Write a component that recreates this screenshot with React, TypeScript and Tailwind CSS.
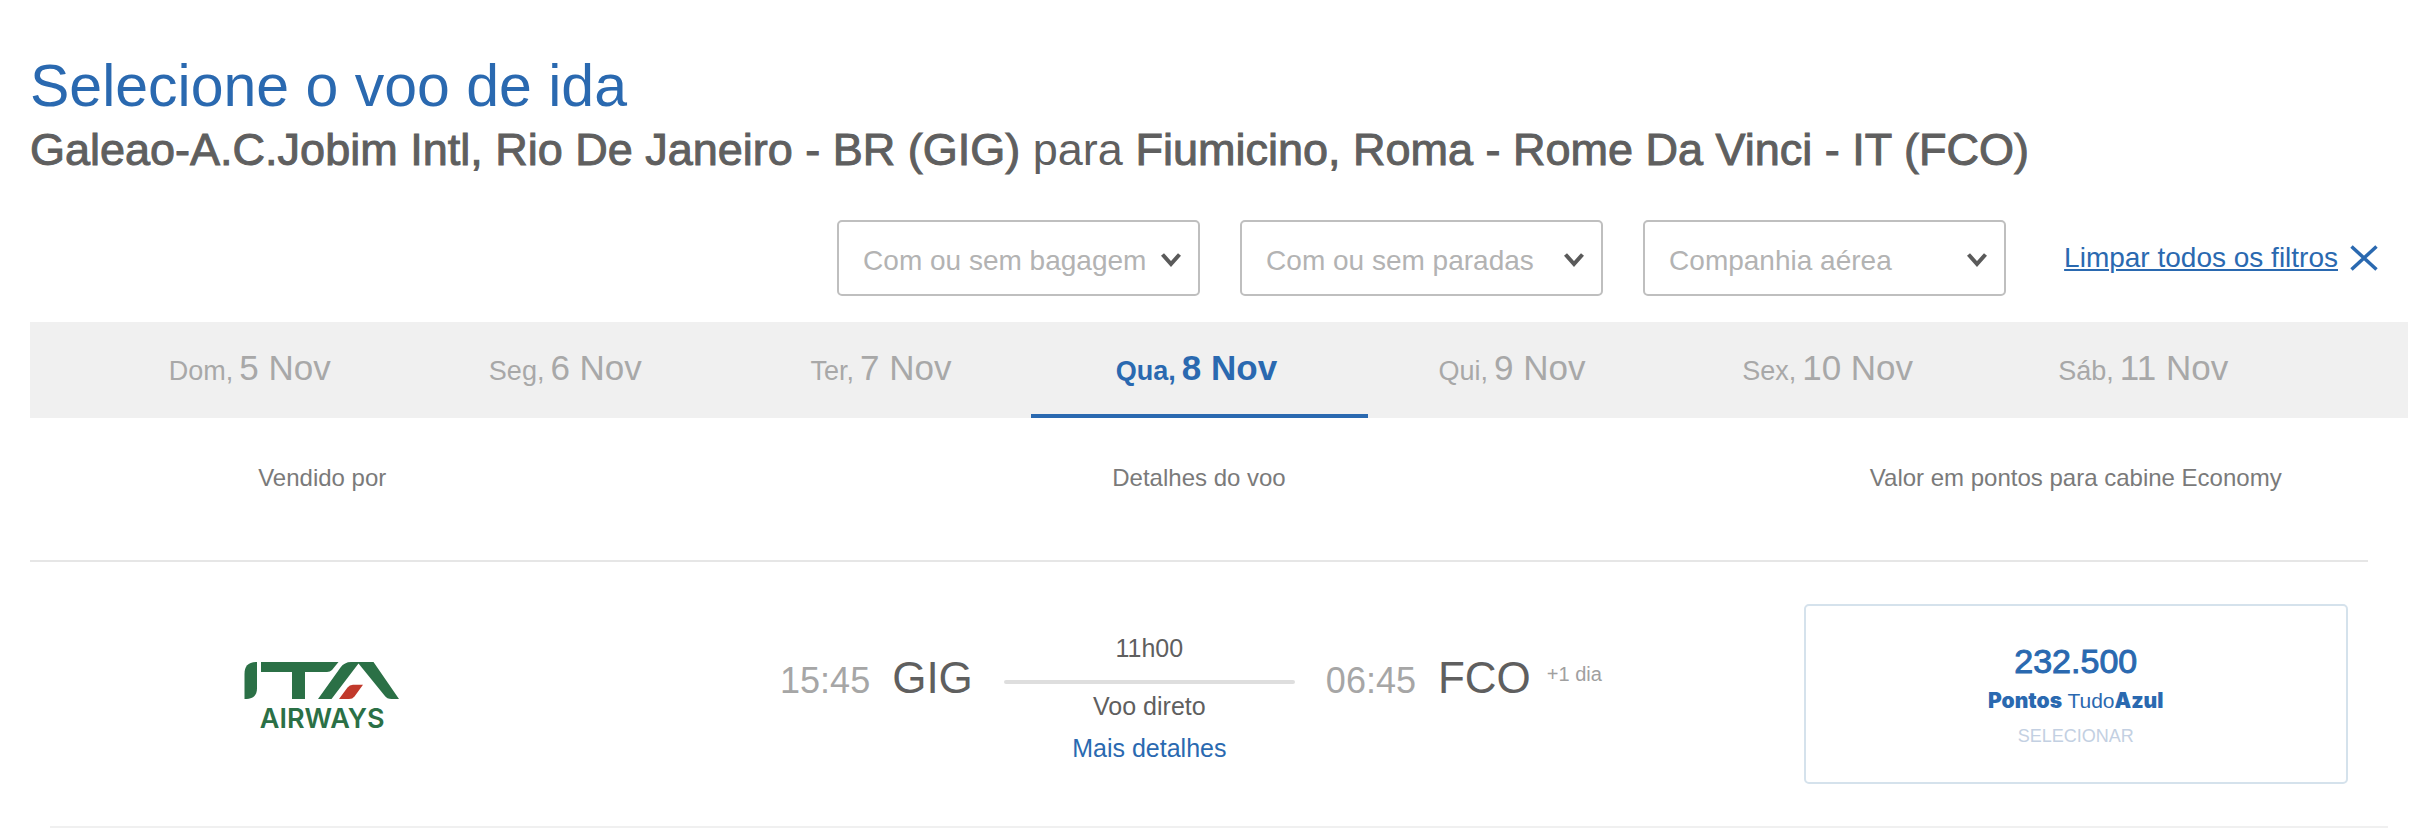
import { ReactNode } from "react";

const filters = [
  { id: "bagagem", name: "Bagagem", label: "Com ou sem bagagem" },
  { id: "paradas", name: "Paradas", label: "Com ou sem paradas" },
  { id: "companhia", name: "Companhia", label: "Companhia aérea" },
];

const days = [
  { week: "Dom,", date: "5 Nov" },
  { week: "Seg,", date: "6 Nov" },
  { week: "Ter,", date: "7 Nov" },
  { week: "Qua,", date: "8 Nov", active: true },
  { week: "Qui,", date: "9 Nov" },
  { week: "Sex,", date: "10 Nov" },
  { week: "Sáb,", date: "11 Nov" },
];

function FilterSelect({ id, name, label }: { id: string; name: string; label: string }) {
  return (
    <div className="relative w-[363px]">
      <select
        id={id}
        aria-label={name}
        className="h-[76px] w-full appearance-none rounded-[5px] border-2 border-[#bfbfbf] bg-white pt-[6px] pr-10 pl-6 text-[28px] text-[#b3b3b3]"
      >
        <option>{label}</option>
      </select>
      <svg
        className="pointer-events-none absolute top-8 right-[18px] h-4 w-[22px]"
        viewBox="0 0 22 16"
        fill="none"
        stroke="#5a5a5a"
        strokeWidth="4"
        aria-hidden="true"
      >
        <path d="M2.5 2.5 11 12l8.500-9.500" />
      </svg>
    </div>
  );
}

function ItaLogo() {
  return (
    <div className="flex w-[156px] flex-col items-center">
      <svg className="h-[37px] w-[156px]" viewBox="25 22 156 37" aria-hidden="true">
        <g fill="#2b7046">
          <path d="M38 22v26.500C38 55 34.500 59 25.500 59V34C25.500 26 29 22 38 22Z" />
          <path d="M42 22h77.500l-6.500 8q-2 2-5 2H86v27H73V32H42Z" />
          <path d="M99 59 121.500 27.500Q125.500 22 132 22H154.500L180 59h-7.500q-4.500 0-7-3.500L139.500 23.500 112.500 59Z" />
        </g>
        <path
          fill="#c1392b"
          d="M120 59 128.500 47.500Q130.500 44.700 134 44.700H144L135.500 56.500Q133.500 59 130 59Z"
        />
      </svg>
      <span className="mt-1 font-[Inter,sans-serif] text-[27px] leading-8 font-semibold text-[#2b7046]">
        AIRWAYS
      </span>
    </div>
  );
}

function Airport({ time, code, children }: { time: string; code: string; children?: ReactNode }) {
  return (
    <div className="flex items-baseline pt-[50px] leading-[48px]">
      <span className="text-[36px] text-[#a6a6a6]">{time}</span>
      <span className="ml-[22px] text-[44px] text-[#5f5f5f]">{code}</span>
      {children}
    </div>
  );
}

export default function App() {
  return (
    <main className="bg-white pt-[54px] pr-7 pl-[30px] font-['Liberation_Sans',Arial,sans-serif]">
      <h1 className="text-[59px] leading-[64px] text-[#2a69b0]">Selecione o voo de ida</h1>
      <p className="mt-1 text-[45px] leading-[56px] text-[#5f5f5f]">
        <span className="[-webkit-text-stroke:1px]">Galeao-A.C.Jobim Intl, Rio De Janeiro - BR (GIG)</span> para{" "}
        <span className="[-webkit-text-stroke:1px]">Fiumicino, Roma - Rome Da Vinci - IT (FCO)</span>
      </p>

      <div className="mt-[42px] flex items-center justify-end gap-10 pr-[30px]">
        {filters.map((f) => (
          <FilterSelect key={f.id} {...f} />
        ))}
        <a href="#limpar" className="ml-[18px] flex items-center gap-3 text-[28px] leading-8 text-[#2a69b0]">
          <span className="underline decoration-2 underline-offset-2">Limpar todos os filtros</span>
          <svg
            className="h-[26px] w-7"
            viewBox="0 0 28 26"
            fill="none"
            stroke="currentColor"
            strokeWidth="3.5"
            aria-hidden="true"
          >
            <path d="M1.500 1.500 26.500 24.500M26.500 1.500 1.500 24.500" />
          </svg>
        </a>
      </div>

      <nav className="mt-[26px] grid grid-cols-7 bg-[#f0f0f0] pr-[107px] pl-[62px]">
        {days.map((d) => (
          <button
            key={d.date}
            type="button"
            className={
              d.active
                ? "-mr-[14px] -ml-2 flex h-24 items-baseline justify-center gap-[6px] border-b-4 border-[#2a69b0] pt-[22px] pr-[6px] font-bold text-[#2a69b0]"
                : "flex h-24 items-baseline justify-center gap-[6px] pt-[22px] text-[#a8a8a8]"
            }
          >
            <span className="text-[27px] leading-[48px]">{d.week}</span>
            <span className="text-[35px] leading-[48px]">{d.date}</span>
          </button>
        ))}
      </nav>

      <section className="mr-10">
        <div className="grid h-36 grid-cols-4 border-b-2 border-[#e6e6e6] pt-11 text-center text-[24px] leading-8 text-[#7a7a7a]">
          <span>Vendido por</span>
          <span className="col-span-2">Detalhes do voo</span>
          <span>Valor em pontos para cabine Economy</span>
        </div>

        <div className="grid grid-cols-4 py-[42px]">
          <div className="flex justify-center pt-[58px]">
            <ItaLogo />
          </div>

          <div className="col-span-2 flex items-start justify-center gap-[31px] pr-4">
            <Airport time="15:45" code="GIG" />
            <div className="flex w-[291px] flex-col items-center pt-7 text-[25px] leading-8 text-[#5f5f5f]">
              <span>11h00</span>
              <span className="mt-4 h-1 w-full rounded-full bg-[#dedede]" />
              <span className="mt-[6px]">Voo direto</span>
              <a href="#detalhes" className="mt-[10px] text-[#2a69b0]">
                Mais detalhes
              </a>
            </div>
            <Airport time="06:45" code="FCO">
              <span className="mt-2 ml-4 self-start text-[20px] leading-6 text-[#a0a0a0]">+1 dia</span>
            </Airport>
          </div>

          <button
            type="button"
            className="mx-5 flex h-[180px] flex-col items-center rounded-[5px] border-2 border-[#d5e2ec] pt-[35px] text-[#2a69b0]"
          >
            <span className="text-[34px] leading-10 [-webkit-text-stroke:1px]">232.500</span>
            <span className="mt-2 text-[21px] leading-6">
              <span className="font-[Inter,sans-serif] font-black">Pontos</span> Tudo
              <span className="font-[Inter,sans-serif] font-black">Azul</span>
            </span>
            <span className="mt-[11px] text-[18px] leading-6 text-[#c3d0e2]">SELECIONAR</span>
          </button>
        </div>
      </section>
      <hr className="mr-5 ml-5 border-t-2 border-[#f0f0f0]" />
    </main>
  );
}
